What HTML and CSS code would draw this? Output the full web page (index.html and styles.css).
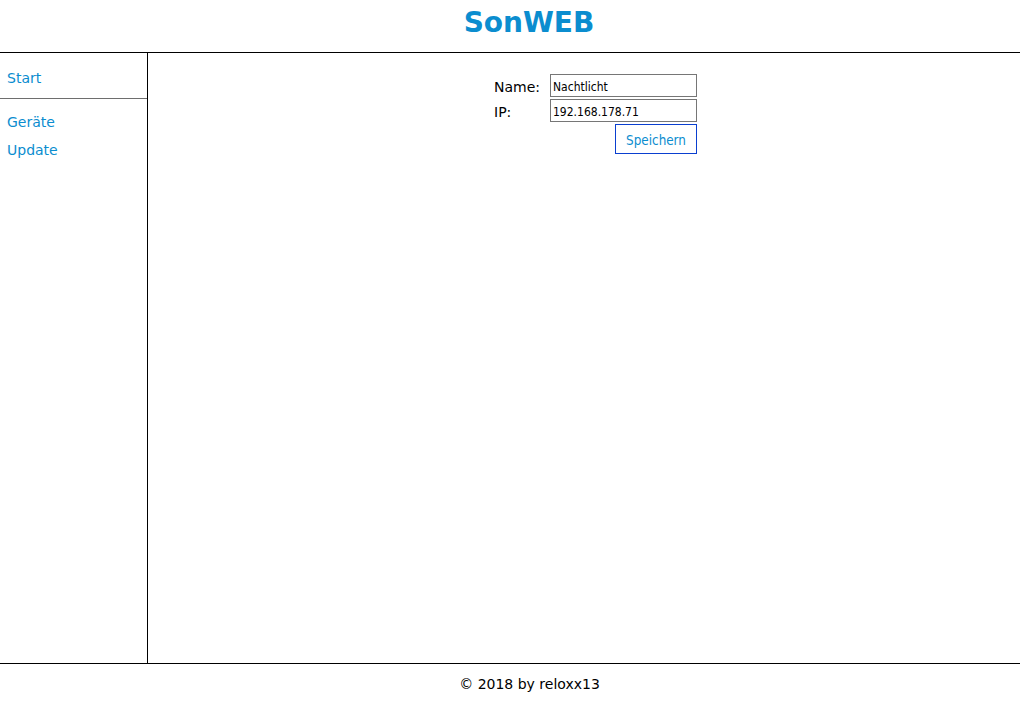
FILE: index.html
```html
<!DOCTYPE html>
<html lang="de">
<head>
<meta charset="utf-8">
<title>SonWEB</title>
<link rel="stylesheet" href="styles.css">
</head>
<body>
<div class="page">
  <header class="header">
    <h1 class="title">SonWEB</h1>
  </header>
  <div class="main">
    <nav class="sidebar">
      <div class="nav-group nav-first">
        <a class="nav-link" href="#">Start</a>
      </div>
      <div class="nav-group nav-second">
        <a class="nav-link" href="#">Geräte</a>
        <a class="nav-link" href="#">Update</a>
      </div>
    </nav>
    <section class="content">
      <form class="device-form">
        <label class="label" for="name">Name:</label>
        <input class="field" id="name" type="text" value="Nachtlicht">
        <label class="label" for="ip">IP:</label>
        <input class="field" id="ip" type="text" value="192.168.178.71">
        <span></span>
        <div class="actions"><button class="btn" type="button">Speichern</button></div>
      </form>
    </section>
  </div>
  <footer class="footer">© 2018 by reloxx13</footer>
</div>
</body>
</html>
```
FILE: styles.css
```css
html, body {
  margin: 0;
  padding: 0;
  background: #fff;
}
body {
  font-family: "DejaVu Sans", Verdana, sans-serif;
  font-size: 14px;
  color: #000;
}
.page {
  display: flex;
  flex-direction: column;
  height: 718px;
}
.header {
  height: 52px;
  border-bottom: 1px solid #000;
  box-sizing: content-box;
  padding-left: 38px;
  text-align: center;
}
.title {
  margin: 0;
  font-size: 28px;
  font-weight: bold;
  line-height: 46px;
  color: #0b8dcf;
}
.main {
  display: flex;
  flex: 1;
  min-height: 0;
}
.sidebar {
  width: 147px;
  border-right: 1px solid #000;
  display: flex;
  flex-direction: column;
}
.nav-group {
  display: flex;
  flex-direction: column;
  padding-left: 7px;
}
.nav-first {
  padding-top: 11px;
  padding-bottom: 6px;
  border-bottom: 1px solid #6e6e6e;
}
.nav-second {
  padding-top: 9px;
}
.nav-link {
  color: #0b8dcf;
  text-decoration: none;
  line-height: 28px;
}
.content {
  flex: 1;
  display: flex;
  justify-content: center;
  align-items: flex-start;
  padding-left: 23px;
  padding-top: 21px;
}
.device-form {
  display: grid;
  grid-template-columns: 56px 147px;
  row-gap: 2px;
  align-items: center;
}
.label {
  font-size: 14px;
  padding-top: 3px;
}
.field {
  box-sizing: border-box;
  width: 147px;
  height: 23px;
  margin: 0;
  border: 1px solid #767676;
  padding: 3px 2px 0;
  font-family: "DejaVu Sans Condensed", "DejaVu Sans", sans-serif;
  font-size: 12px;
  color: #000;
  background: #fff;
  outline: none;
}
.actions {
  display: flex;
  justify-content: flex-end;
}
.btn {
  box-sizing: border-box;
  width: 82px;
  height: 30px;
  margin: 0;
  padding: 2px 0 0;
  border: 1px solid #0a3fd0;
  background: #fff;
  color: #0b8dcf;
  font-family: "DejaVu Sans Condensed", "DejaVu Sans", sans-serif;
  font-size: 13.33px;
}
.footer {
  border-top: 1px solid #000;
  height: 55px;
  box-sizing: border-box;
  padding-top: 6px;
  padding-left: 39px;
  text-align: center;
  line-height: 28px;
}
```
